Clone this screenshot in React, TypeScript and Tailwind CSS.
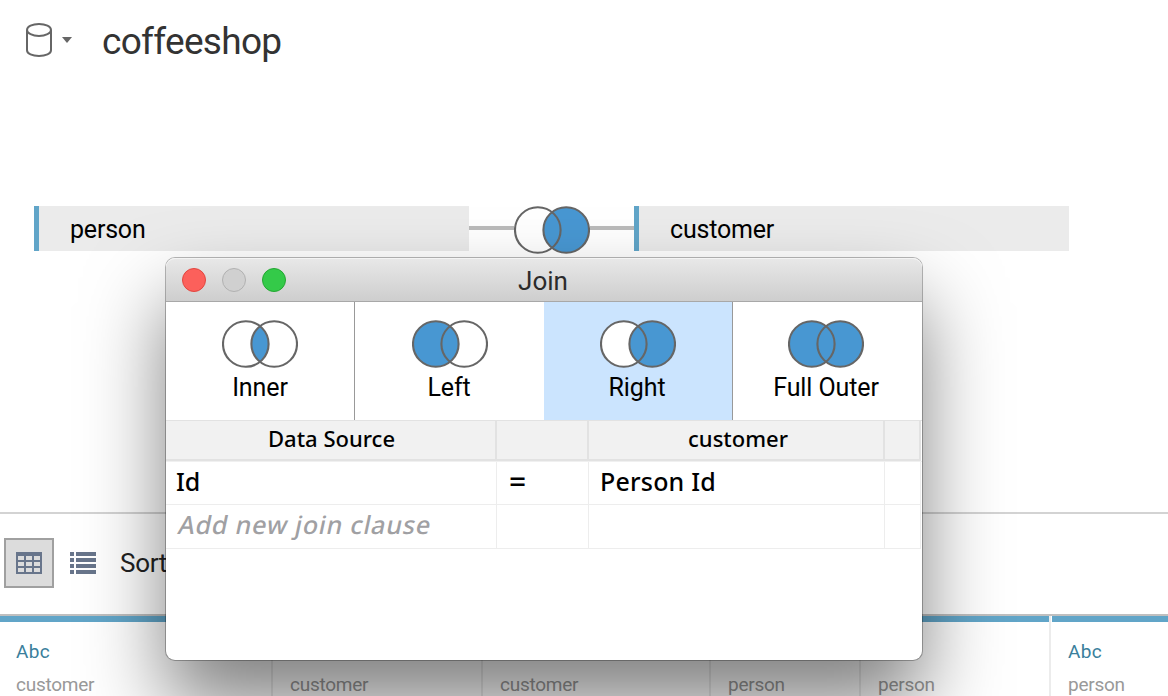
import React from "react";

type JoinKind = "inner" | "left" | "right" | "full";

const BLUE = "#4897d2";

function Venn({ kind }: { kind: JoinKind }) {
  const left = kind === "left" || kind === "full" ? BLUE : "#fff";
  const right = kind === "right" || kind === "full" ? BLUE : "#fff";
  return (
    <svg width="76" height="48" viewBox="0 0 76 48" className="block shrink-0">
      <circle cx="23.8" cy="24" r="23" fill={left} />
      <circle cx="52.2" cy="24" r="23" fill={right} />
      <path d="M38 5.9A23 23 0 0 1 38 42.1A23 23 0 0 1 38 5.9Z" fill={BLUE} />
      <g fill="none" stroke="#666" strokeWidth="2.1">
        <circle cx="23.8" cy="24" r="22.8" />
        <circle cx="52.2" cy="24" r="22.8" />
      </g>
    </svg>
  );
}

function Header() {
  return (
    <header className="flex h-[84px] items-start pl-[25px]">
      <svg width="28" height="36" viewBox="0 0 28 36" className="mt-[22px]" fill="none" stroke="#666" strokeWidth="2">
        <ellipse cx="14" cy="7.9" rx="12" ry="6" />
        <path d="M2 7.9V28.3C2 31.8 7.3 34 14 34S26 31.8 26 28.3V7.9" />
      </svg>
      <svg width="10" height="6" viewBox="0 0 10 6" className="mt-[37px] ml-[9px]">
        <path d="M0 0H10L5 6Z" fill="#666" />
      </svg>
      <h1 className="mt-[19px] ml-[30px] text-[37px] leading-[46px] tracking-[-0.7px] text-[#333]">coffeeshop</h1>
    </header>
  );
}

function TableBox({ name }: { name: string }) {
  return (
    <div className="h-[45px] w-[435px] shrink-0 border-l-[5px] border-[#61a5c8] bg-[#ebebeb] pl-[31px] text-[25px] leading-[48px] tracking-[-0.2px] text-black">
      {name}
    </div>
  );
}

function JoinCanvas() {
  return (
    <section className="flex h-[428px] items-start pt-[122px] pl-[34px]">
      <TableBox name="person" />
      <div className="mt-[20px] h-1 w-[45px] bg-[#bbb]" />
      <Venn kind="right" />
      <div className="mt-[20px] h-1 w-[44px] bg-[#bbb]" />
      <TableBox name="customer" />
    </section>
  );
}

function Toolbar() {
  return (
    <section className="flex h-[104px] items-start border-y-2 border-t-[#d3d3d3] border-b-[#bfbfbf] pt-6 pl-1">
      <button className="flex size-[50px] items-center justify-center border-2 border-[#a0a0a0] bg-[#dcdcdc]">
        <svg width="26" height="22" viewBox="0 0 26 22">
          <path
            fillRule="evenodd"
            fill="#68758b"
            d="M0 0H26V22H0ZM2 4V8H8V4ZM10 4V8H16V4ZM18 4V8H24V4ZM2 10V14H8V10ZM10 10V14H16V10ZM18 10V14H24V10ZM2 16V20H8V16ZM10 16V20H16V16ZM18 16V20H24V16Z"
          />
        </svg>
      </button>
      <svg width="26" height="22" viewBox="0 0 26 22" className="mt-[14px] ml-4">
        <path
          fill="#68758b"
          d="M0 0H4V4H0ZM6 0H26V4H6ZM0 6H4V10H0ZM6 6H26V10H6ZM0 12H4V16H0ZM6 12H26V16H6ZM0 18H4V22H0ZM6 18H26V22H6Z"
        />
      </svg>
      <span className="mt-[9px] ml-6 text-[26px] leading-8 tracking-[-0.3px] text-[#222]">Sort</span>
    </section>
  );
}

const columns = [
  { width: "w-[274px]", type: "Abc", table: "customer" },
  { width: "w-[210px]", type: "", table: "customer" },
  { width: "w-[228px]", type: "", table: "customer" },
  { width: "w-[150px]", type: "", table: "person" },
  { width: "w-[190px]", type: "", table: "person" },
  { width: "w-[160px]", type: "Abc", table: "person" },
];

function DataGrid() {
  return (
    <section className="flex h-20">
      {columns.map((c, i) => (
        <div key={i} className={`${c.width} shrink-0 pr-px`}>
          <div className="h-full border-r-2 border-[#ececec]">
            <div className="h-1.5 bg-[#61a5c8]" />
            <div className="pl-4">
              <div className="mt-[18px] h-6 text-[19px] leading-6 tracking-[0.4px] text-[#3a7f9c]">{c.type}</div>
              <div className="mt-[9px] text-[19px] leading-6 tracking-[-0.25px] text-[#999]">{c.table}</div>
            </div>
          </div>
        </div>
      ))}
    </section>
  );
}

const joins: { kind: JoinKind; label: string; cls: string; labelCls: string }[] = [
  { kind: "inner", label: "Inner", cls: "border-r border-[#999]", labelCls: "" },
  { kind: "left", label: "Left", cls: "pl-px", labelCls: "mr-0.5" },
  { kind: "right", label: "Right", cls: "border-r border-[#999] bg-[#cbe4fe]", labelCls: "mr-0.5" },
  { kind: "full", label: "Full Outer", cls: "pr-[3px]", labelCls: "" },
];

function JoinDialog() {
  return (
    <div className="absolute top-[258px] left-[166px] flex h-[402px] w-[756px] flex-col rounded-[9px] bg-white shadow-[0_0_0_1px_rgba(0,0,0,0.28),0_44px_80px_rgba(0,0,0,0.5)]">
      <div className="relative flex h-11 shrink-0 items-start justify-center rounded-t-[9px] border-b border-[#a8a8a8] bg-linear-to-b from-[#e8e8e8] to-[#cecece] shadow-[inset_0_1px_0_#f4f4f4]">
        <div className="absolute top-[10px] left-4 flex gap-4">
          <span className="size-6 rounded-full border border-[#e2463f] bg-[#fc605b]" />
          <span className="size-6 rounded-full border border-[#b1b1b1] bg-[#d0d0d0]" />
          <span className="size-6 rounded-full border border-[#24a732] bg-[#34ca49]" />
        </div>
        <span className="mt-[7px] mr-0.5 text-[26px] leading-8 text-[#2b2b2b]">Join</span>
      </div>

      <div className="flex h-[118px] shrink-0">
        {joins.map((j) => (
          <div key={j.kind} className={`flex w-[189px] flex-col items-center pt-[18px] ${j.cls}`}>
            <Venn kind={j.kind} />
            <span className={`mt-1 text-[25px] leading-8 tracking-[-0.1px] text-black ${j.labelCls}`}>{j.label}</span>
          </div>
        ))}
      </div>

      <div className="font-['Noto_Sans',sans-serif] font-medium text-black">
        <div className="flex h-[42px] border-t border-b border-t-[#e2e2e2] border-b-[#f0f0f0] text-center text-[22px] leading-[34px]">
          <div className="w-[331px] border-r-2 border-b-2 border-[#e2e2e2] bg-[#f1f1f1] pl-0.5">Data Source</div>
          <div className="w-[92px] border-r-2 border-b-2 border-[#e2e2e2] bg-[#f1f1f1]" />
          <div className="w-[296px] border-r-2 border-b-2 border-[#e2e2e2] bg-[#f1f1f1] pl-1">customer</div>
          <div className="w-9 border-r-2 border-b-2 border-[#e2e2e2] bg-[#f1f1f1]" />
        </div>
        <div className="flex h-[43px] w-[755px] border-b border-[#ededed] text-[25px] leading-[39px]">
          <div className="w-[331px] border-r border-[#ededed] pl-[10px]">Id</div>
          <div className="w-[92px] border-r border-[#ededed] pl-3 text-[30px]">=</div>
          <div className="w-[296px] border-r border-[#ededed] pl-[11px] tracking-[0.2px]">Person Id</div>
          <div className="w-9 border-r border-[#ededed]" />
        </div>
        <div className="flex h-11 w-[755px] border-b border-[#ededed] text-[25px] leading-[39px]">
          <div className="w-[331px] border-r border-[#ededed] pl-[13px] tracking-[0.85px] text-[#a0a0a3]">
            <span className="inline-block -skew-x-12">Add new join clause</span>
          </div>
          <div className="w-[92px] border-r border-[#ededed]" />
          <div className="w-[296px] border-r border-[#ededed]" />
          <div className="w-9 border-r border-[#ededed]" />
        </div>
      </div>
    </div>
  );
}

export default function App() {
  return (
    <main className="relative h-[696px] w-[1168px] overflow-hidden bg-white font-[Roboto,sans-serif] whitespace-nowrap">
      <Header />
      <JoinCanvas />
      <Toolbar />
      <DataGrid />
      <JoinDialog />
    </main>
  );
}
